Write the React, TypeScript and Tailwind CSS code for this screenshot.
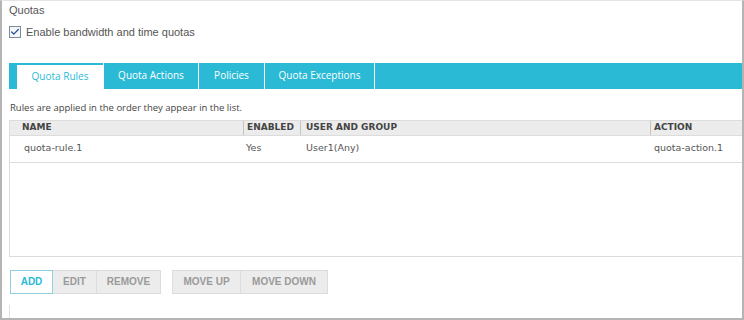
import { Check } from 'lucide-react';

const tabs = [
  { label: 'Quota Rules', w: 'w-[86px]' },
  { label: 'Quota Actions', w: 'w-[95px]' },
  { label: 'Policies', w: 'w-[66px]' },
  { label: 'Quota Exceptions', w: 'w-[110px]' },
];

const rows = [{ name: 'quota-rule.1', enabled: 'Yes', user: 'User1(Any)', action: 'quota-action.1' }];

const App = () => {
  return (
    <div className="w-[744px] h-[320px] bg-white overflow-hidden">
      <div className="h-[320px] border-t border-t-[#e4e4e4] border-l-2 border-r-2 border-b-2 border-[#b4b4b4] flex flex-col font-['Liberation_Sans',Arial,sans-serif]">
        <div className="pl-[7px] pt-[3px] text-[11px] leading-[13px] text-[#555]">Quotas</div>
        <label className="flex items-center gap-[5px] pl-[7px] mt-[7px] text-[11px] text-[#555]">
          <span className="w-[12px] h-[12px] border border-[#7a8a9a] bg-[#f4f6f8] flex items-center justify-center">
            <Check className="w-[10px] h-[10px] text-[#2a4a9a]" strokeWidth={3} />
          </span>
          Enable bandwidth and time quotas
        </label>

        <div className="ml-[7px] mt-[22px] h-[26px] bg-[#2bbad5] flex items-end pl-[8px] font-['Open_Sans',sans-serif] text-[10px]">
          {tabs.map((t, i) => (
            <div
              key={t.label}
              className={
                i === 0
                  ? `h-[24px] ${t.w} bg-white text-[#2bbad5] flex items-center justify-center`
                  : `h-[26px] ${t.w} text-white flex items-center justify-center border-l border-white`
              }
            >
              {t.label}
            </div>
          ))}
          <div className="h-[26px] border-l border-white" />
        </div>

        <div className="pl-[8px] mt-[13px] text-[9.5px] leading-[12px] text-[#444] font-['Open_Sans',sans-serif]">
          Rules are applied in the order they appear in the list.
        </div>

        <div className="ml-[7px] mt-[6px] h-[137px] border-l border-b border-[#dcdcdc] font-['DejaVu_Sans',Verdana,sans-serif]">
          <div className="grid grid-cols-[233px_57px_350px_1fr] h-[16px] bg-[#ececec] border-y border-[#dcdcdc] font-bold text-[#444] text-[9px]">
            <div className="pl-[12px] flex items-center">NAME</div>
            <div className="pl-[3px] flex items-center border-l border-[#c4c4c4]">ENABLED</div>
            <div className="pl-[5px] flex items-center border-l border-[#c4c4c4]">USER AND GROUP</div>
            <div className="pl-[3px] flex items-center border-l border-[#c4c4c4]">ACTION</div>
          </div>
          {rows.map((r) => (
            <div key={r.name} className="grid grid-cols-[233px_57px_350px_1fr] h-[27px] border-b border-[#dcdcdc] text-[#555] text-[9.5px]">
              <div className="pl-[14px] flex items-center">{r.name}</div>
              <div className="pl-[3px] flex items-center">{r.enabled}</div>
              <div className="pl-[6px] flex items-center">{r.user}</div>
              <div className="pl-[4px] flex items-center">{r.action}</div>
            </div>
          ))}
        </div>

        <div className="ml-[8px] mt-[13px] flex gap-[11px] text-[10px] font-bold">
          <div className="flex">
            <button className="h-[24px] w-[43px] border border-[#8fd2e2] bg-white text-[#2bbad5]">ADD</button>
            <button className="h-[24px] w-[44px] border border-l-0 border-[#dcdcdc] bg-[#ececec] text-[#9a9a9a]">EDIT</button>
            <button className="h-[24px] w-[64px] border border-l-0 border-[#dcdcdc] bg-[#ececec] text-[#9a9a9a]">REMOVE</button>
          </div>
          <div className="flex">
            <button className="h-[24px] w-[69px] border border-[#dcdcdc] bg-[#ececec] text-[#9a9a9a]">MOVE UP</button>
            <button className="h-[24px] w-[87px] border border-l-0 border-[#dcdcdc] bg-[#ececec] text-[#9a9a9a]">MOVE DOWN</button>
          </div>
        </div>

        <div className="ml-[7px] mt-[11px] flex-1 border-l border-[#e0e0e0]" />
      </div>
    </div>
  );
};

export default App;
